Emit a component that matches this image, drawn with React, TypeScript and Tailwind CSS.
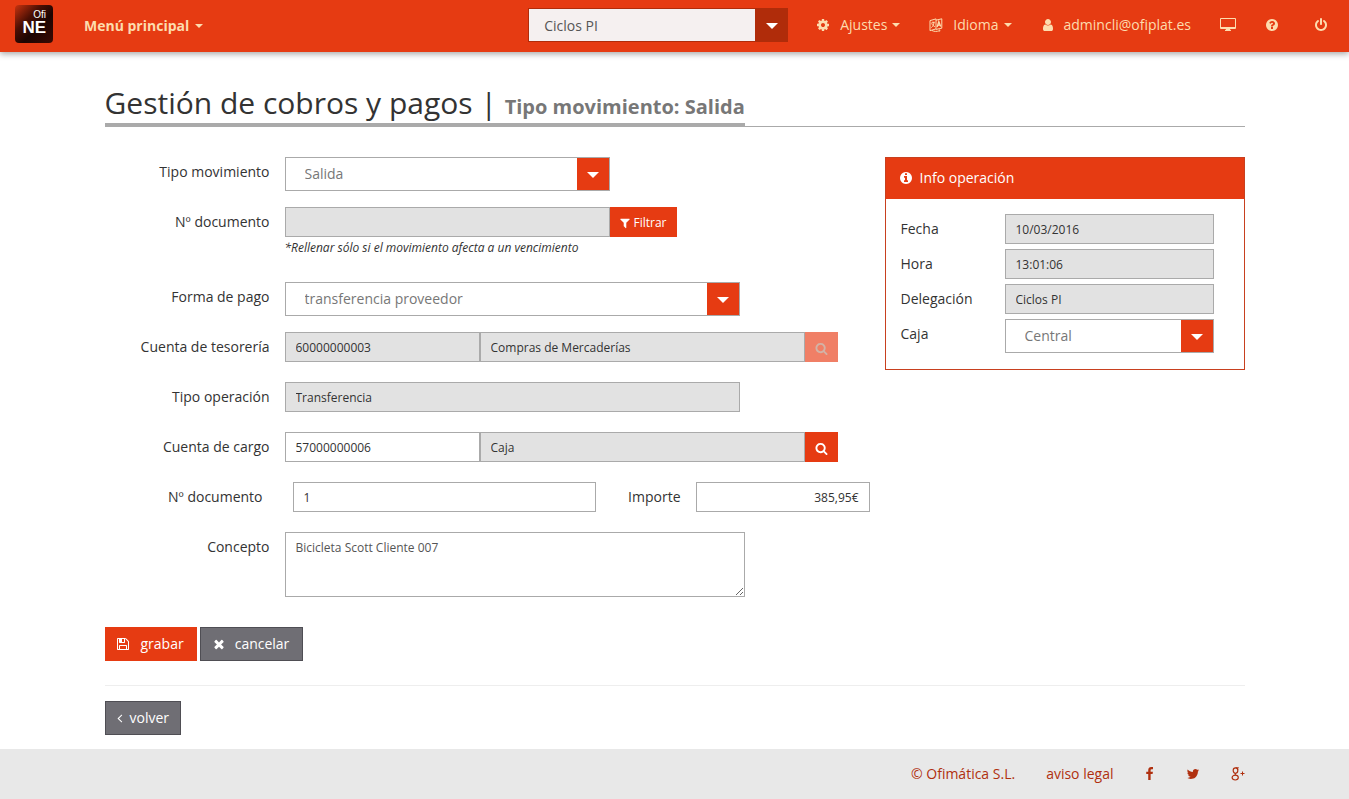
import React from "react";

const CIRCLE = "q0 209-103 385.5t-279.5 279.5-385.5 103-385.5-103-279.5-279.5-103-385.5 103-385.5 279.5-279.5 385.5-103 385.5 103 279.5 279.5 103 385.5z";

const icons = {
  cog: "M1152 896q0-106-75-181t-181-75-181 75-75 181 75 181 181 75 181-75 75-181zm512-109v222q0 12-8 23t-20 13l-185 28q-19 54-39 91 35 50 107 138 10 12 10 25t-9 23q-27 37-99 108t-94 71q-12 0-26-9l-138-108q-44 23-91 38-16 136-29 186-7 28-36 28h-222q-14 0-24.5-8.5t-11.5-21.5l-28-184q-49-16-90-37l-141 107q-10 9-25 9-14 0-25-11-126-114-165-168-7-10-7-23 0-12 8-23 15-21 51-66.5t54-70.5q-27-50-41-99l-183-27q-13-2-21-12.5t-8-23.5v-222q0-12 8-23t19-13l186-28q14-46 39-92-40-57-107-138-10-12-10-24 0-10 9-23 26-36 98.5-107.5t94.5-71.5q13 0 26 10l138 107q44-23 91-38 16-136 29-186 7-28 36-28h222q14 0 24.5 8.5t11.5 21.5l28 184q49 16 90 37l142-107q9-9 24-9 13 0 25 10 129 119 165 170 7 8 7 22 0 12-8 23-15 21-51 66.5t-54 70.5q26 50 41 98l183 28q13 2 21 12.5t8 23.5z",
  user: "M1536 1399q0 109-62.5 187t-150.5 78h-854q-88 0-150.5-78t-62.5-187q0-85 8.5-160.5t31.5-152 58.5-131 94-89 134.5-34.5q131 128 313 128t313-128q76 0 134.5 34.5t94 89 58.5 131 31.5 152 8.5 160.5zm-256-887q0 159-112.5 271.5t-271.5 112.5-271.5-112.5-112.5-271.5 112.5-271.5 271.5-112.5 271.5 112.5 112.5 271.5z",
  question: "M1024 1376v-192q0-14-9-23t-23-9h-192q-14 0-23 9t-9 23v192q0 14 9 23t23 9h192q14 0 23-9t9-23zm256-672q0-88-55.5-163t-138.5-116-170-41q-243 0-371 213-15 24 8 42l132 100q7 6 19 6 16 0 25-12 53-68 86-92 34-24 86-24 48 0 85.5 26t37.5 59q0 38-20 61t-68 45q-63 28-115.5 86.5t-52.5 125.5v36q0 14 9 23t23 9h192q14 0 23-9t9-23q0-19 21.5-49.5t54.5-49.5q32-18 49-28.5t46-35 44.5-48 28-60.5 12.5-81zm384 192" + CIRCLE,
  power: "M1664 896q0 156-61 298t-164 245-245 164-298 61-298-61-245-164-164-245-61-298q0-182 80.5-343t226.5-270q43-32 95.5-25t83.5 50q32 42 24.5 94.5t-49.5 84.5q-98 74-151.5 181t-53.5 228q0 104 40.5 198.5t109.5 163.5 163.5 109.5 198.5 40.5 198.5-40.5 163.5-109.5 109.5-163.5 40.5-198.5q0-121-53.5-228t-151.5-181q-42-32-49.5-84.5t24.5-94.5q31-43 84-50t95 25q146 109 226.5 270t80.5 343zm-640-768v640q0 52-38 90t-90 38-90-38-38-90v-640q0-52 38-90t90-38 90 38 38 90z",
  filter: "M1595 295q17 41-14 70l-493 493v742q0 42-39 59-13 5-25 5-27 0-45-19l-256-256q-19-19-19-45v-486l-493-493q-31-29-14-70 17-39 59-39h1280q42 0 59 39z",
  search: "M1216 832q0-185-131.5-316.5t-316.5-131.5-316.5 131.5-131.5 316.5 131.5 316.5 316.5 131.5 316.5-131.5 131.5-316.5zm512 832q0 52-38 90t-90 38q-54 0-90-38l-343-342q-179 124-399 124-143 0-273.5-55.5t-225-150-150-225-55.5-273.5 55.5-273.5 150-225 225-150 273.5-55.5 273.5 55.5 225 150 150 225 55.5 273.5q0 220-124 399l343 343q37 37 37 90z",
  info: "M1152 1376v-160q0-14-9-23t-23-9h-96v-512q0-14-9-23t-23-9h-320q-14 0-23 9t-9 23v160q0 14 9 23t23 9h96v320h-96q-14 0-23 9t-9 23v160q0 14 9 23t23 9h448q14 0 23-9t9-23zm-128-896v-160q0-14-9-23t-23-9h-192q-14 0-23 9t-9 23v160q0 14 9 23t23 9h192q14 0 23-9t9-23zm640 416" + CIRCLE,
  save: "M512 1536h768v-384h-768v384zm896 0h128v-896q0-14-10-38.5t-20-34.5l-281-281q-10-10-34-20t-39-10v416q0 40-28 68t-68 28h-576q-40 0-68-28t-28-68v-416h-128v1280h128v-416q0-40 28-68t68-28h832q40 0 68 28t28 68v416zm-384-928v-320q0-13-9.5-22.5t-22.5-9.5h-192q-13 0-22.5 9.5t-9.5 22.5v320q0 13 9.5 22.5t22.5 9.5h192q13 0 22.5-9.5t9.5-22.5zm640 32v928q0 40-28 68t-68 28h-1344q-40 0-68-28t-28-68v-1344q0-40 28-68t68-28h928q40 0 88 20t76 48l280 280q28 28 48 76t20 88z",
  times: "M1490 1322q0 40-28 68l-136 136q-28 28-68 28t-68-28l-294-294-294 294q-28 28-68 28t-68-28l-136-136q-28-28-28-68t28-68l294-294-294-294q-28-28-28-68t28-68l136-136q28-28 68-28t68 28l294 294 294-294q28-28 68-28t68 28l136 136q28 28 28 68t-28 68l-294 294 294 294q28 28 28 68z",
  angleLeft: "M1203 544q0 13-10 23l-393 393 393 393q10 10 10 23t-10 23l-50 50q-10 10-23 10t-23-10l-466-466q-10-10-10-23t10-23l466-466q10-10 23-10t23 10l50 50q10 10 10 23z",
  facebook: "M1343 12v264h-157q-86 0-116 36t-30 108v189h293l-39 296h-254v759h-306v-759h-255v-296h255v-218q0-186 104-288.5t277-102.5q147 0 228 12z",
  twitter: "M1684 408q-67 98-162 167 1 14 1 42 0 130-38 259.5t-115.5 248.5-184.5 210.5-258 146-323 54.5q-271 0-496-145 35 4 78 4 225 0 401-138-105-2-188-64.5t-114-159.5q33 5 61 5 43 0 85-11-112-23-185.5-111.5t-73.5-205.5v-4q68 38 146 41-66-44-105-115t-39-154q0-88 44-163 121 149 294.5 238.5t371.5 99.5q-8-38-8-74 0-134 94.5-228.5t228.5-94.5q140 0 236 102 109-21 205-78-37 115-142 178 93-10 186-50z",
};

interface IconProps {
  name: keyof typeof icons;
  className?: string;
  viewBox?: string;
}

const Icon = ({ name, className = "size-3.5", viewBox = "0 0 1792 1792" }: IconProps) => (
  <svg viewBox={viewBox} fill="currentColor" aria-hidden="true" className={`shrink-0 ${className}`}>
    <path d={icons[name]} />
  </svg>
);

const LanguageIcon = () => (
  <svg viewBox="0 0 14 14" fill="none" stroke="currentColor" aria-hidden="true" className="size-3.5 shrink-0">
    <path d="M1 2.6 7 .9v10L1 12.7zM7 2.2l5.8-1.4v9.4L7 11.4M3 12.5c2 1.2 5 1.2 7.5.2M10 13.3l1.2-.8-1-.8" />
    <path d="M2.2 5.2 5.8 4.2M4 3.5v1.2M5 4.5C4.8 6.8 3.8 8.5 2.3 9.6M2.9 5.8c.6 1.5 1.6 2.3 3 2.8" />
    <path d="M8.2 9 9.8 3.6l1.9 5M8.9 7.3l2.2-.4" strokeWidth="1.3" />
  </svg>
);

const DesktopIcon = () => (
  <svg viewBox="0 0 16 14" fill="currentColor" aria-hidden="true" className="h-3.5 w-4 shrink-0">
    <path fillRule="evenodd" d="M1 0h14q1 0 1 1v9q0 1-1 1h-5q0 1 1 1.300V13H5v-.7q1-.3 1-1.300H1q-1 0-1-1V1q0-1 1-1zM1 1v8h14V1z" />
  </svg>
);

const GooglePlusIcon = () => (
  <svg viewBox="0 0 14 14" fill="none" stroke="currentColor" aria-hidden="true" className="size-3.5 shrink-0">
    <ellipse cx="4.5" cy="3.6" rx="2.3" ry="2.7" strokeWidth="1.2" />
    <path d="M4.600.8h3.200M5.800 1q1 .6 1.200 1.500M4.800 6.300Q3 7.200 5.200 8.300" />
    <ellipse cx="4.2" cy="10.6" rx="3.1" ry="2.4" strokeWidth="1.2" />
    <path d="M9.500 6.500h4M11.500 4.500v4" />
  </svg>
);

const Caret = () => (
  <span className="border-x-4 border-t-4 border-x-transparent border-t-current" />
);

interface SelectBoxProps {
  id: string;
  value: string;
  className?: string;
}

const SelectBox: React.FC<SelectBoxProps> = ({ id, value, className }) => (
  <div className={`relative h-[34px] ${className}`}>
    <select id={id} className="h-full w-full appearance-none border border-[#aaa] bg-white pl-[19px] pr-9 text-sm text-[#777]">
      <option>{value}</option>
    </select>
    <span className="pointer-events-none absolute inset-y-px right-px flex w-8 items-center justify-center bg-[#e63b12]">
      <span className="mt-0.5 border-x-6 border-t-6 border-x-transparent border-t-white" />
    </span>
  </div>
);

const inputBase = "h-[30px] border border-[#aaa] px-2.5 text-xs text-[#333]";
const readOnlyInput = `${inputBase} bg-[#e2e2e2]`;
const labelBase = "pt-[5px] text-sm leading-5";

const Row = ({ label, htmlFor, children }: { label: string; htmlFor: string; children: React.ReactNode }) => (
  <div className="flex min-h-[50px] items-start gap-[15px]">
    <label htmlFor={htmlFor} className={`${labelBase} w-[165px] shrink-0 text-right`}>
      {label}
    </label>
    {children}
  </div>
);

const Header = () => (
  <header className="flex h-[52px] items-center justify-between bg-[#e63b12] pl-[15px] pr-[21px] pb-1 text-sm text-[#fddcae] shadow-[0_2px_6px_rgba(0,0,0,0.35)]">
    <div className="flex items-center">
      <a
        href="#"
        className="flex size-[38px] flex-col items-end rounded-sm bg-linear-[135deg,#c8330f_0%,#4a0f04_35%,#1c0502_60%,#3a0a03_100%] pt-1 pr-[7px] font-['Liberation_Sans',sans-serif] text-white"
      >
        <span className="text-[10px] leading-[11px]">Ofi</span>
        <span className="text-[17px] leading-[15px] font-bold">NE</span>
      </a>
      <button type="button" className="ml-[31px] mt-1 flex items-center gap-1.5 font-bold">
        Menú principal <Caret />
      </button>
    </div>
    <div className="flex items-center">
      <div className="relative mt-0.5 h-[34px] w-[260px]">
        <select
          aria-label="Empresa"
          className="h-full w-full appearance-none border border-[#b02c0a] bg-[#f5f0f0] pt-0.5 pl-[15px] text-sm text-[#555]"
        >
          <option>Ciclos PI</option>
        </select>
        <span className="pointer-events-none absolute inset-y-0 right-0 flex w-[33px] items-center justify-center bg-[#b02c0a]">
          <span className="mt-0.5 border-x-6 border-t-6 border-x-transparent border-t-white" />
        </span>
      </div>
      <nav className="mt-0.5 ml-7 flex items-center gap-[29px]">
        <button type="button" className="flex items-center gap-[5px]">
          <Icon name="cog" />
          <span className="ml-[5px]">Ajustes</span>
          <Caret />
        </button>
        <button type="button" className="flex items-center gap-[5px]">
          <LanguageIcon />
          <span className="ml-[5px]">Idioma</span>
          <Caret />
        </button>
        <a href="#" className="flex items-center gap-[9px]">
          <Icon name="user" />
          admincli@ofiplat.es
        </a>
        <button type="button" aria-label="Escritorio">
          <DesktopIcon />
        </button>
        <button type="button" aria-label="Ayuda">
          <Icon name="question" />
        </button>
        <button type="button" aria-label="Salir" className="ml-1.5">
          <Icon name="power" />
        </button>
      </nav>
    </div>
  </header>
);

const InfoPanel = () => (
  <section className="w-[360px] shrink-0 self-start border border-[#c8401f]">
    <h2 className="flex h-[41px] items-center gap-[7px] bg-[#e63b12] px-[13px] pb-0.5 text-sm text-white">
      <Icon name="info" />
      Info operación
    </h2>
    <div className="grid grid-cols-[104px_209px] gap-y-[5px] px-[15px] pt-[15px] pb-4">
      <label htmlFor="fecha" className={labelBase}>Fecha</label>
      <input id="fecha" readOnly defaultValue="10/03/2016" className={readOnlyInput} />
      <label htmlFor="hora" className={labelBase}>Hora</label>
      <input id="hora" readOnly defaultValue="13:01:06" className={readOnlyInput} />
      <label htmlFor="delegacion" className={labelBase}>Delegación</label>
      <input id="delegacion" readOnly defaultValue="Ciclos PI" className={readOnlyInput} />
      <label htmlFor="caja" className={labelBase}>Caja</label>
      <SelectBox id="caja" value="Central" className="w-full" />
    </div>
  </section>
);

const MovementForm = () => (
  <div className="w-[765px]">
    <Row label="Tipo movimiento" htmlFor="tipo-movimiento">
      <SelectBox id="tipo-movimiento" value="Salida" className="w-[325px]" />
    </Row>

    <Row label="Nº documento" htmlFor="documento-filtro">
      <div className="pb-[26px]">
        <div className="flex">
          <input id="documento-filtro" readOnly className={`${readOnlyInput} w-[325px]`} />
          <button type="button" className="flex h-[30px] w-[67px] items-center justify-center gap-0.5 bg-[#e63b12] pt-0.5 text-xs text-white">
            <Icon name="filter" className="size-3" />
            Filtrar
          </button>
        </div>
        <p className="pt-[3px] text-xs leading-4 italic">
          *Rellenar sólo si el movimiento afecta a un vencimiento
        </p>
      </div>
    </Row>

    <Row label="Forma de pago" htmlFor="forma-pago">
      <SelectBox id="forma-pago" value="transferencia proveedor" className="w-[455px]" />
    </Row>

    <Row label="Cuenta de tesorería" htmlFor="cuenta-tesoreria">
      <div className="flex">
        <input id="cuenta-tesoreria" readOnly defaultValue="60000000003" className={`${readOnlyInput} w-[195px]`} />
        <input aria-label="Nombre de cuenta de tesorería" readOnly defaultValue="Compras de Mercaderías" className={`${readOnlyInput} w-[325px]`} />
        <button type="button" disabled aria-label="Buscar cuenta de tesorería" className="flex h-[30px] w-[33px] items-center justify-center bg-[#f07f66] pt-0.5 text-[#d3b3a6]">
          <Icon name="search" className="size-[13px]" />
        </button>
      </div>
    </Row>

    <Row label="Tipo operación" htmlFor="tipo-operacion">
      <input id="tipo-operacion" readOnly defaultValue="Transferencia" className={`${readOnlyInput} w-[455px]`} />
    </Row>

    <Row label="Cuenta de cargo" htmlFor="cuenta-cargo">
      <div className="flex">
        <input id="cuenta-cargo" defaultValue="57000000006" className={`${inputBase} w-[195px]`} />
        <input aria-label="Nombre de cuenta de cargo" readOnly defaultValue="Caja" className={`${readOnlyInput} w-[325px]`} />
        <button type="button" aria-label="Buscar cuenta de cargo" className="flex h-[30px] w-[33px] items-center justify-center bg-[#e63b12] pt-0.5 text-white">
          <Icon name="search" className="size-[13px]" />
        </button>
      </div>
    </Row>

    <div className="flex min-h-[50px] items-start">
      <label htmlFor="documento" className={`${labelBase} w-[158px] text-right`}>Nº documento</label>
      <input id="documento" defaultValue="1" className={`${inputBase} ml-[30px] w-[303px]`} />
      <label htmlFor="importe" className={`${labelBase} ml-auto`}>Importe</label>
      <input id="importe" defaultValue="385,95€" className={`${inputBase} ml-[15px] w-[174px] text-right`} />
    </div>

    <Row label="Concepto" htmlFor="concepto">
      <textarea
        id="concepto"
        defaultValue="Bicicleta Scott Cliente 007"
        className="h-[65px] w-[460px] border border-[#aaa] px-2.5 py-1.5 text-xs leading-[18px] text-[#555]"
      />
    </Row>
  </div>
);

const buttonBase = "flex h-[34px] items-center pl-[11px] text-sm text-white";
const grayButton = `${buttonBase} border border-[#4f4e54] bg-[#6f6e74]`;

export default function App() {
  return (
    <div className="flex min-h-screen flex-col bg-white font-['Open_Sans',sans-serif] text-[#333]">
      <Header />

      <main className="mx-auto w-full max-w-[1140px] grow pt-[33px]">
        <div className="border-b border-[#aaa]">
          <h1 className="-mb-px inline-block border-b-4 border-[#aaa] pb-0.5 align-top text-[30px] leading-9">
            Gestión de cobros y pagos |{" "}
            <small className="text-xl font-bold text-[#777]">Tipo movimiento: Salida</small>
          </h1>
        </div>

        <form className="mt-[30px]">
          <div className="flex justify-between">
            <MovementForm />
            <InfoPanel />
          </div>
          <div className="mt-[30px] flex gap-[3px]">
            <button type="button" className={`${buttonBase} gap-[11px] bg-[#e63b12] pr-[13px]`}>
              <Icon name="save" />
              grabar
            </button>
            <button type="button" className={`${grayButton} gap-[9px] pr-[13px]`}>
              <Icon name="times" />
              cancelar
            </button>
          </div>
        </form>

        <hr className="mt-6 border-[#eee]" />
        <button type="button" className={`${grayButton} mt-[15px] mb-3.5 gap-[7px] pr-[11px]`}>
          <Icon name="angleLeft" viewBox="544 0 768 1792" className="h-3.5 w-1.5" />
          volver
        </button>
      </main>

      <footer className="bg-[#e8e8e8] text-sm text-[#b0300f]">
        <div className="mx-auto flex h-[50px] w-full max-w-[1140px] items-center justify-end gap-[31px]">
          <a href="#">© Ofimática S.L.</a>
          <a href="#">aviso legal</a>
          <a href="#" aria-label="Facebook"><Icon name="facebook" viewBox="320 0 1280 1792" className="h-3.5 w-2.5" /></a>
          <a href="#" aria-label="Twitter"><Icon name="twitter" /></a>
          <a href="#" aria-label="Google+"><GooglePlusIcon /></a>
        </div>
      </footer>
    </div>
  );
}
